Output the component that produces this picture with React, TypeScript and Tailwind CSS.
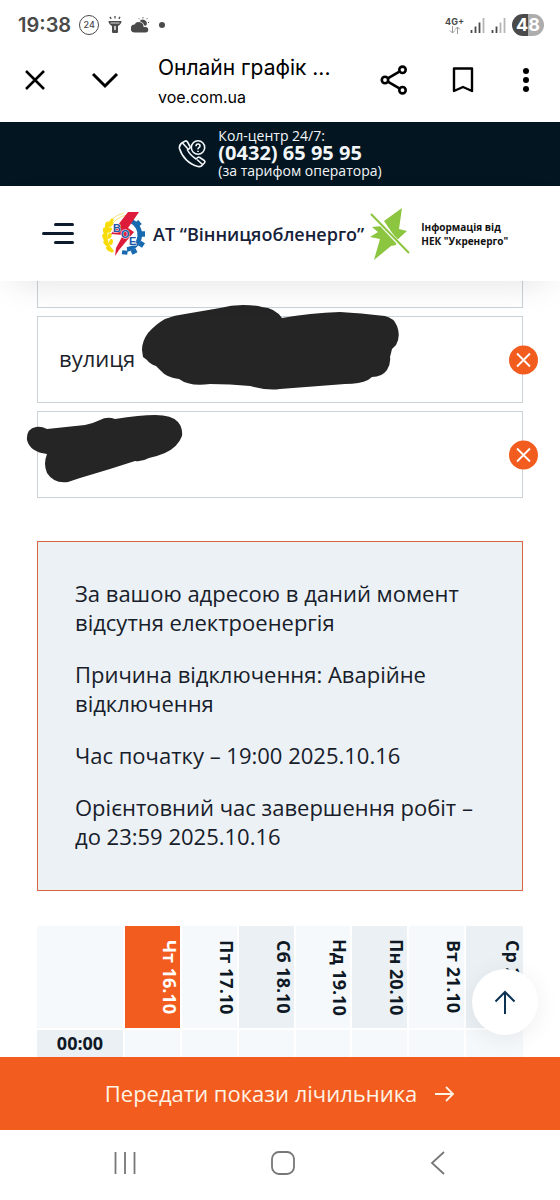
import React, { useState } from "react";

const days = ["Чт 16.10", "Пт 17.10", "Сб 18.10", "Нд 19.10", "Пн 20.10", "Вт 21.10", "Ср 22.10"];

function StatusBar() {
    return (
        <div className="flex h-[50px] items-center justify-between pl-[18px] pr-4 font-['Inter',sans-serif] text-[#4a4a4a]">
            <div className="flex items-center gap-2">
                <span className="text-xl font-semibold">19:38</span>
                <span className="flex h-5 w-5 items-center justify-center rounded-full border border-[#4a4a4a] text-[9px] font-medium">24</span>
                {/* flashlight */}
                <svg className="h-[18px] w-4" viewBox="0 0 16 18" fill="#4a4a4a">
                    <path d="M1.500 5h13q0 3-3.500 5v6q0 1-1 1H6q-1 0-1-1v-6Q1.500 8 1.500 5z" />
                    <path d="M8 0v2.500M3 .8l1.200 2M13 .8l-1.200 2" stroke="#4a4a4a" strokeWidth="1.300" />
                    <path d="M3.500 7h9" stroke="#fff" strokeWidth=".8" />
                    <path d="M8 10.500v3" stroke="#fff" strokeWidth="1.400" strokeLinecap="round" />
                </svg>
                {/* weather */}
                <svg className="h-4 w-[18px]" viewBox="0 0 18 16" fill="#4a4a4a">
                    <path d="M4 15.500a4 4 0 0 1-.5-8 4.800 4.500 0 0 1 9 2.500h2a2.700 2.700 0 0 1 0 5.500z" />
                    <path d="M8.500 4.300a3.900 3.900 0 1 1 6.500 4.500 4 4 0 0 0-1.800-.3 6 6 0 0 0-4.700-4.200z" />
                    <path d="M8.500 2.200l-.7-.8M12 1.300V.2M15.500 2.200l.8-.9M17 5.500h1" stroke="#4a4a4a" strokeWidth="1" />
                </svg>
                <span className="ml-[2px] h-[6px] w-[6px] rounded-full bg-[#4a4a4a]" />
            </div>
            <div className="flex items-center gap-[6px]">
                <div className="flex flex-col items-center">
                    <span className="text-[9px] font-bold leading-[9px]">4G+</span>
                    <svg className="h-2 w-3" viewBox="0 0 12 8" fill="none" stroke="#999">
                        <path d="M3.500 0v7M1 4.500L3.500 7 6 4.500M8.500 8V1M6 3.500L8.500 1 11 3.500" />
                    </svg>
                </div>
                <SignalBars strong />
                <SignalBars />
                <div className="flex h-[22px] w-8 items-center justify-center rounded-full bg-linear-to-r from-[#4a4a4a] from-50% to-[#adadad] to-50% text-lg font-bold text-white">
                    48
                </div>
            </div>
        </div>
    );
}

function SignalBars({ strong = false }: { strong?: boolean }) {
    return (
        <svg className="h-[15px] w-[15px]" viewBox="0 0 15 15" strokeWidth="1.800">
            <path d="M1.500 15v-3M5.500 15V8.500" stroke="#4a4a4a" />
            <path d="M9.500 15V4.500" stroke={strong ? "#4a4a4a" : "#b5b5b5"} />
            <path d="M13.500 15V0" stroke="#b5b5b5" />
        </svg>
    );
}

function BrowserBar() {
    return (
        <div className="flex h-[72px] items-center pl-6 pr-[23px] pb-3 text-black font-['Inter',sans-serif]">
            <button aria-label="Закрити">
                <svg className="h-[22px] w-[22px]" viewBox="0 0 22 22" fill="none" stroke="currentColor" strokeWidth="2.500">
                    <path d="M2 2l18 18M20 2L2 20" />
                </svg>
            </button>
            <button aria-label="Згорнути" className="ml-[45px]">
                <svg className="h-[22px] w-7" viewBox="0 0 28 22" fill="none" stroke="currentColor" strokeWidth="3">
                    <path d="M2 5l12 12L26 5" />
                </svg>
            </button>
            <div className="ml-[39px] min-w-0 flex-1 pt-[6px]">
                <p className="truncate text-[21px] leading-7">Онлайн графік ...</p>
                <p className="text-base leading-[30px]">voe.com.ua</p>
            </div>
            <div className="flex items-center">
                <button aria-label="Поділитися" className="mr-11">
                    <svg className="h-[30px] w-7" viewBox="0 0 28 30" fill="none" stroke="currentColor" strokeWidth="2.600">
                        <circle cx="5" cy="15" r="3.200" />
                        <circle cx="22.500" cy="4.800" r="3.200" />
                        <circle cx="22.500" cy="25.200" r="3.200" />
                        <path d="M7.800 13.400l12-7M7.800 16.600l12 7" />
                    </svg>
                </button>
                <button aria-label="Закладка" className="mr-[41px]">
                    <svg className="h-[26px] w-[22px]" viewBox="0 0 22 26" fill="none" stroke="currentColor" strokeWidth="2.400">
                        <path d="M2 1.500h18V24l-9-4-9 4z" strokeLinejoin="round" />
                    </svg>
                </button>
                <button aria-label="Меню браузера">
                    <svg className="h-6 w-[22px]" viewBox="0 0 22 24" fill="currentColor">
                        <circle cx="11" cy="3" r="3" />
                        <circle cx="11" cy="12" r="3" />
                        <circle cx="11" cy="21" r="3" />
                    </svg>
                </button>
            </div>
        </div>
    );
}

function CallCenter() {
    return (
        <div className="flex h-16 items-center justify-center gap-3 bg-[#021521] text-[#f2f6f8]">
            <svg className="h-7 w-7" viewBox="0 0 28 28" fill="none" stroke="currentColor" strokeWidth="1.600" strokeLinejoin="round">
                <path d="M4.500 2.500l3-1.500q1.200-.4 2 1l2.500 4.500q.5 1.200-.7 2.200L9.500 10q2.500 5 8.500 9l1.700-1.500q1-.8 2 0l4.500 3q1.200 1 .3 2.200L24.500 25q-1.500 2-4.500 1.500C11 24.500 4 17 1.500 8.500q-.7-3.500 3-6z" />
                <path d="M4.500 3l5.500 6M19 19.500l5.500 5" />
                <circle cx="20" cy="7.500" r="6.700" fill="#021521" />
                <path d="M18 6.200q0-2.200 2-2.200t2 2q0 1-1.100 1.700t-.9 1.700M20 10.700v1.300" />
            </svg>
            <div className="-mt-[3px]">
                <p className="text-sm leading-[17px]">Кол-центр 24/7:</p>
                <a href="tel:0432659595" className="block text-xl font-bold leading-[18px]">(0432) 65 95 95</a>
                <p className="text-sm leading-[17px]">(за тарифом оператора)</p>
            </div>
        </div>
    );
}

function CompanyLogo() {
    return (
        <svg className="h-[46px] w-11 shrink-0" viewBox="0 0 44 46">
            {/* gear */}
            <path d="M29 10a15 15 0 0 1-4 28.500" fill="none" stroke="#1769b0" strokeWidth="4.500" />
            <path d="M34.500 14l3.500-3M39 23h4M37.500 32l4 2.500M31 38.500l2 4M23 39.500l-.5 4" stroke="#1769b0" strokeWidth="5.500" />
            {/* wheat */}
            <path d="M22 2Q9 5 5 17M25 4Q14 6 9 15" fill="none" stroke="#f1dc5a" strokeWidth=".8" />
            <path d="M11 8C2 17 1 31 11 41" fill="none" stroke="#f7dc0a" strokeWidth="3" />
            <g fill="#f7dc0a">
                <ellipse cx="5" cy="14" rx="2" ry="3.500" transform="rotate(10 5 14)" />
                <ellipse cx="3" cy="20" rx="2" ry="3.500" transform="rotate(-10 3 20)" />
                <ellipse cx="2.500" cy="26" rx="2" ry="3.500" transform="rotate(-20 2.500 26)" />
                <ellipse cx="4" cy="32" rx="2" ry="3.500" transform="rotate(-35 4 32)" />
                <ellipse cx="7" cy="38" rx="2" ry="3.500" transform="rotate(-50 7 38)" />
                <ellipse cx="9" cy="13" rx="2" ry="3" transform="rotate(45 9 13)" />
                <ellipse cx="7.500" cy="19" rx="2" ry="3" transform="rotate(35 7.500 19)" />
                <ellipse cx="7.500" cy="25" rx="2" ry="3" transform="rotate(25 7.500 25)" />
                <ellipse cx="9" cy="31" rx="2" ry="3" transform="rotate(10 9 31)" />
            </g>
            <path d="M26 1h11L26 17l6 4-15 18-4 6 1-8 7-13-12-1z" fill="#dc1c3a" />
            <g fill="#2456a6" stroke="#fff" strokeWidth="1" paintOrder="stroke" fontFamily="Liberation Sans, sans-serif" fontSize="11" fontWeight="bold">
                <text x="11" y="21">В</text>
                <text x="19" y="27">О</text>
                <text x="27" y="34">Е</text>
            </g>
        </svg>
    );
}

function SiteHeader() {
    return (
        <header className="relative z-10 flex h-[95px] items-center bg-white pl-[42px] pr-8 shadow-[0_12px_36px_-12px_rgba(0,0,0,0.13)]">
            <button aria-label="Меню" className="flex w-8 shrink-0 flex-col items-end gap-[6px]">
                <span className="h-[3px] w-5 rounded-full bg-[#0d1b2c]" />
                <span className="h-[3px] w-8 rounded-full bg-[#0d1b2c]" />
                <span className="h-[3px] w-5 rounded-full bg-[#0d1b2c]" />
            </button>
            <a href="#" className="ml-7 flex items-center gap-[7px] text-lg font-semibold whitespace-nowrap text-[#16213a]">
                <CompanyLogo />
                АТ “Вінницяобленерго”
            </a>
            <a href="#" className="ml-[6px] flex items-center gap-[11px] text-[10px] font-bold leading-[14px] whitespace-nowrap text-[#111]">
                <svg className="h-[52px] w-10 shrink-0" viewBox="0 0 40 52" fill="#8cc540">
                    <path d="M32 0l-3 21 8 2-10 9L14 13z" />
                    <path d="M2 19l10-1 15 16-1 3-5 1L4 52l6-21-10-2 8-5z" />
                    <path d="M5 10l33 35" fill="none" stroke="#fff" strokeWidth="4" />
                    <path d="M1 6l38 39" fill="none" stroke="#8cc540" strokeWidth="2" />
                </svg>
                <span>
                    Інформація від
                    <br />
                    НЕК "Укренерго"
                </span>
            </a>
        </header>
    );
}

type FieldProps = {
    label: string;
    initial: string;
    children?: React.ReactNode;
};

function Field({ label, initial, children }: FieldProps) {
    const [value, setValue] = useState(initial);

    return (
        <div className="relative">
            <input
                aria-label={label}
                value={value}
                onChange={(e) => setValue(e.target.value)}
                className="block h-[87px] w-full border border-[#c9d2d7] px-[21px] pb-1 text-[22px] text-[#1c232b] outline-none"
            />
            {children}
            <button
                aria-label="Очистити"
                onClick={() => setValue("")}
                className="absolute top-1/2 -right-[15px] flex h-[29px] w-[29px] -translate-y-1/2 items-center justify-center rounded-full bg-[#f25c1f]"
            >
                <svg className="h-[15px] w-[15px]" viewBox="0 0 15 15" stroke="#fff" strokeWidth="1.800">
                    <path d="M1 1l13 13M14 1L1 14" />
                </svg>
            </button>
        </div>
    );
}

function Notice() {
    return (
        <section className="mt-[43px] flex flex-col gap-[23px] border border-[#d3693a] bg-[#ecf1f5] px-[37px] pt-[37px] pb-[39px] text-[22px] leading-[29px] text-[#17202a]">
            <p>За вашою адресою в даний момент відсутня електроенергія</p>
            <p>Причина відключення: Аварійне відключення</p>
            <p>Час початку – 19:00 2025.10.16</p>
            <p>Орієнтовний час завершення робіт – до 23:59 2025.10.16</p>
        </section>
    );
}

function Schedule() {
    return (
        <table className="mt-[35px] w-full table-fixed border-separate border-spacing-0 text-[#0f1926]">
            <thead>
                <tr className="h-[104px]">
                    <td className="w-[88px] border-r-2 border-b-2 border-white bg-[#f6f9fc]" />
                    {days.map((day, i) => (
                        <th
                            key={day}
                            scope="col"
                            className={`border-r-2 border-b-2 border-white p-0 last:border-r-0 ${i === 0 ? "bg-[#f25c1f] text-white" : i % 2 === 0 ? "bg-[#ebf0f4]" : "bg-[#f6f9fc]"}`}
                        >
                            <div className="flex justify-end">
                                <span className="text-lg font-bold leading-5 whitespace-nowrap [writing-mode:vertical-rl]">{day}</span>
                            </div>
                        </th>
                    ))}
                </tr>
            </thead>
            <tbody>
                <tr className="h-[27px]">
                    <th scope="row" className="border-r-2 border-white bg-[#ebf0f4] p-0 text-lg font-bold leading-[27px]">00:00</th>
                    {days.map((day) => (
                        <td key={day} className="border-r-2 border-white bg-[#f6f9fc] last:border-r-0" />
                    ))}
                </tr>
            </tbody>
        </table>
    );
}

export default function App() {
    return (
        <div className="flex min-h-screen flex-col bg-white font-['Open_Sans',sans-serif]">
            <StatusBar />
            <BrowserBar />
            <CallCenter />
            <SiteHeader />
            <main className="relative flex-1 px-[37px]">
                <div className="mb-2 h-[27px] border border-t-0 border-[#c9d2d7]" />
                <div className="flex flex-col gap-2">
                    <Field label="Вулиця" initial="вулиця">
                        <svg className="absolute -top-3 left-[103px] h-[88px] w-[260px]" viewBox="140 304 260 88" fill="#252525">
                            <path d="M142 350Q142 341 148 333Q156 324 165 319Q175 315 185 314L220 308Q231 305 243 305Q254 305 262 307Q275 308 282 318Q310 313 340 312Q360 313 385 316Q394 318 397 326Q401 336 396 345L392 349Q391 353 390 357Q391 363 387 370Q382 377 372 377L368 380Q360 384 345 384L280 389Q268 391 250 386Q230 384 210 384Q190 387 179 379Q167 378 160 370L156 366Q150 364 147 360L143 357Z" />
                        </svg>
                    </Field>
                    <Field label="Будинок" initial="">
                        <svg className="absolute top-1 -left-[11px] h-[68px] w-[157px]" viewBox="26 415 157 68" fill="#252525">
                            <path d="M27 440Q26 429 36 427Q41 426 47 429L85 425Q94 423 100 420Q107 416 115 419Q140 415 155 415Q172 415 178 422Q183 428 182 436Q178 447 165 453Q158 456 149 458Q142 462 135 461L110 469L80 478L68 482Q54 484 47 473Q43 464 47 454Q30 452 27 440Z" />
                        </svg>
                    </Field>
                </div>
                <Notice />
                <Schedule />
                <button
                    aria-label="Нагору"
                    className="absolute right-[22px] bottom-[22px] flex h-[66px] w-[66px] items-center justify-center rounded-full bg-white shadow-[0_4px_24px_rgba(0,0,0,0.07)]"
                >
                    <svg className="h-6 w-[22px]" viewBox="0 0 22 24" fill="none" stroke="#0c3354" strokeWidth="2">
                        <path d="M11 24V2M1.500 11.500L11 2l9.500 9.500" />
                    </svg>
                </button>
            </main>
            <button className="flex h-[73px] items-center justify-center gap-[18px] bg-[#f25c1f] text-[22px] text-[#fff3e4]">
                Передати покази лічильника
                <svg className="h-4 w-5" viewBox="0 0 20 16" fill="none" stroke="currentColor" strokeWidth="1.800">
                    <path d="M0 8h18M11 1l7 7-7 7" />
                </svg>
            </button>
            <nav className="flex h-[70px] items-center justify-between px-[110px] pb-1 text-[#777]">
                <button aria-label="Останні">
                    <svg className="h-6 w-[30px]" viewBox="0 0 30 24" stroke="currentColor" strokeWidth="1.800">
                        <path d="M5.500 1v22M15 1v22M24.500 1v22" />
                    </svg>
                </button>
                <button aria-label="Додому">
                    <svg className="h-[26px] w-[26px]" viewBox="0 0 26 26" fill="none" stroke="currentColor" strokeWidth="1.800">
                        <rect x="2" y="2" width="22" height="22" rx="7" />
                    </svg>
                </button>
                <button aria-label="Назад">
                    <svg className="h-6 w-6" viewBox="0 0 24 24" fill="none" stroke="currentColor" strokeWidth="1.800">
                        <path d="M18 1L6 12l12 11" />
                    </svg>
                </button>
            </nav>
        </div>
    );
}
